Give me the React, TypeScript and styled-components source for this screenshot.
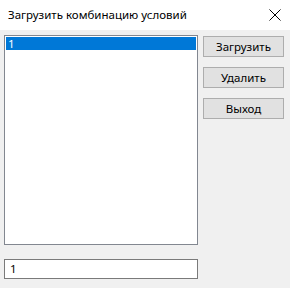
import React from "react";
import styled, { createGlobalStyle } from "styled-components";

const Global = createGlobalStyle`
  html, body {
    margin: 0;
    padding: 0;
    background: #f0f0f0;
  }
  * {
    box-sizing: border-box;
  }
`;

const Window = styled.div`
  width: 290px;
  height: 288px;
  display: flex;
  flex-direction: column;
  background: #f0f0f0;
  font-family: "Noto Sans", "Liberation Sans", sans-serif;
  font-size: 11.5px;
  color: #000;
`;

const TitleBar = styled.div`
  height: 30px;
  background: #ffffff;
  display: flex;
  align-items: center;
  justify-content: space-between;
  padding: 0 0 0 8px;
`;

const Title = styled.div`
  line-height: 16px;
`;

const CloseButton = styled.div`
  width: 30px;
  height: 30px;
  display: flex;
  align-items: center;
  justify-content: center;
`;

const Body = styled.div`
  flex: 1;
  display: flex;
  gap: 5px;
  padding: 5px 6px 0 4px;
`;

const LeftColumn = styled.div`
  width: 194px;
  display: flex;
  flex-direction: column;
  gap: 14px;
`;

const ListBox = styled.div`
  height: 210px;
  background: #ffffff;
  border: 1px solid #828790;
  padding: 1px;
`;

const ListItem = styled.div<{ $selected?: boolean }>`
  height: 13px;
  line-height: 13px;
  padding-left: 2px;
  background: ${(p) => (p.$selected ? "#0078d7" : "transparent")};
  color: ${(p) => (p.$selected ? "#ffffff" : "#000000")};
`;

const TextField = styled.div`
  height: 20px;
  background: #ffffff;
  border: 1px solid #7a7a7a;
  padding-left: 5px;
  line-height: 18px;
`;

const ButtonColumn = styled.div`
  display: flex;
  flex-direction: column;
  gap: 10px;
  padding-top: 1px;
`;

const Button = styled.div`
  width: 81px;
  height: 21px;
  background: #e1e1e1;
  border: 1px solid #adadad;
  display: flex;
  align-items: center;
  justify-content: center;
`;

export default function App() {
  return (
    <>
      <Global />
      <Window>
        <TitleBar>
          <Title>Загрузить комбинацию условий</Title>
          <CloseButton>
            <svg width="12" height="12" viewBox="0 0 12 12">
              <path d="M0.5 0.5L11.5 11.5M11.5 0.5L0.5 11.5" stroke="#000" strokeWidth="1" />
            </svg>
          </CloseButton>
        </TitleBar>
        <Body>
          <LeftColumn>
            <ListBox>
              <ListItem $selected>1</ListItem>
            </ListBox>
            <TextField>1</TextField>
          </LeftColumn>
          <ButtonColumn>
            <Button>Загрузить</Button>
            <Button>Удалить</Button>
            <Button>Выход</Button>
          </ButtonColumn>
        </Body>
      </Window>
    </>
  );
}
